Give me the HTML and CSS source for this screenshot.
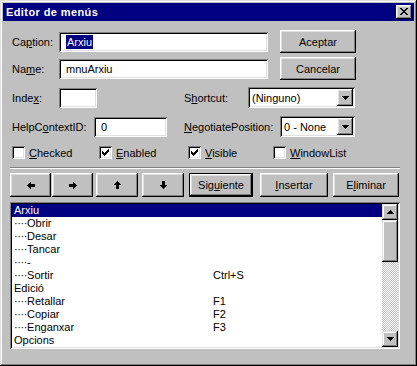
FILE: index.html
```html
<!DOCTYPE html>
<html>
<head>
<meta charset="utf-8">
<link rel="stylesheet" href="styles.css">
</head>
<body>
<div class="window">
  <div class="titlebar">
    <span class="title">Editor de menús</span>
    <span class="close raised"><svg width="8" height="7" viewBox="0 0 8 7" shape-rendering="crispEdges"><path d="M0 0h2v1H0zM6 0h2v1H6zM1 1h2v1H1zM5 1h2v1H5zM2 2h4v1H2zM3 3h2v1H3zM2 4h4v1H2zM1 5h2v1H1zM5 5h2v1H5zM0 6h2v1H0zM6 6h2v1H6z" fill="#000"/></svg></span>
  </div>
  <div class="content">
    <div class="row r1">
      <span class="lbl w-a">Ca<u>p</u>tion:</span>
      <div class="field sunken f-wide"><span class="sel">Arxiu</span></div>
      <div class="btn raised b-dlg">Aceptar</div>
    </div>
    <div class="row r2">
      <span class="lbl w-a">Na<u>m</u>e:</span>
      <div class="field sunken f-wide">mnuArxiu</div>
      <div class="btn raised b-dlg">Cancelar</div>
    </div>
    <div class="row r3">
      <span class="lbl w-a">Inde<u>x</u>:</span>
      <div class="field sunken f-index"></div>
      <span class="lbl w-short">S<u>h</u>ortcut:</span>
      <div class="combo sunken c-short"><span class="ctext">(Ninguno)</span><span class="dd raised"><svg width="7" height="4" viewBox="0 0 7 4" shape-rendering="crispEdges"><path d="M0 0h7v1H0zM1 1h5v1H1zM2 2h3v1H2zM3 3h1v1H3z" fill="#000"/></svg></span></div>
    </div>
    <div class="row r4">
      <span class="lbl w-help">HelpC<u>o</u>ntextID:</span>
      <div class="field sunken f-help">0</div>
      <span class="lbl w-neg"><u>N</u>egotiatePosition:</span>
      <div class="combo sunken c-neg"><span class="ctext">0 - None</span><span class="dd raised"><svg width="7" height="4" viewBox="0 0 7 4" shape-rendering="crispEdges"><path d="M0 0h7v1H0zM1 1h5v1H1zM2 2h3v1H2zM3 3h1v1H3z" fill="#000"/></svg></span></div>
    </div>
    <div class="row r5">
      <div class="chk k1"><span class="box sunken"></span><span class="clbl"><u>C</u>hecked</span></div>
      <div class="chk k2"><span class="box sunken"><svg width="7" height="7" viewBox="0 0 7 7" shape-rendering="crispEdges"><path d="M0 2h1v3H0zM1 3h1v3H1zM2 4h1v3H2zM3 3h1v3H3zM4 2h1v3H4zM5 1h1v3H5zM6 0h1v3H6z" fill="#000"/></svg></span><span class="clbl"><u>E</u>nabled</span></div>
      <div class="chk k3"><span class="box sunken"><svg width="7" height="7" viewBox="0 0 7 7" shape-rendering="crispEdges"><path d="M0 2h1v3H0zM1 3h1v3H1zM2 4h1v3H2zM3 3h1v3H3zM4 2h1v3H4zM5 1h1v3H5zM6 0h1v3H6z" fill="#000"/></svg></span><span class="clbl"><u>V</u>isible</span></div>
      <div class="chk k4"><span class="box sunken"></span><span class="clbl"><u>W</u>indowList</span></div>
    </div>
    <div class="sep"></div>
    <div class="row r6">
      <div class="btn raised a1"><svg width="8" height="7" viewBox="0 0 8 7" shape-rendering="crispEdges"><path d="M3 0h1v1H3zM2 1h2v1H2zM1 2h7v1H1zM0 3h8v1H0zM1 4h7v1H1zM2 5h2v1H2zM3 6h1v1H3z" fill="#000"/></svg></div>
      <div class="btn raised a2"><svg width="8" height="7" viewBox="0 0 8 7" shape-rendering="crispEdges"><g transform="translate(8,0) scale(-1,1)"><path d="M3 0h1v1H3zM2 1h2v1H2zM1 2h7v1H1zM0 3h8v1H0zM1 4h7v1H1zM2 5h2v1H2zM3 6h1v1H3z" fill="#000"/></g></svg></div>
      <div class="btn raised a3"><svg width="7" height="8" viewBox="0 0 7 8" shape-rendering="crispEdges"><g transform="translate(7,0) rotate(90)"><path d="M3 0h1v1H3zM2 1h2v1H2zM1 2h7v1H1zM0 3h8v1H0zM1 4h7v1H1zM2 5h2v1H2zM3 6h1v1H3z" fill="#000"/></g></svg></div>
      <div class="btn raised a4"><svg width="7" height="8" viewBox="0 0 7 8" shape-rendering="crispEdges"><g transform="translate(0,8) rotate(-90)"><path d="M3 0h1v1H3zM2 1h2v1H2zM1 2h7v1H1zM0 3h8v1H0zM1 4h7v1H1zM2 5h2v1H2zM3 6h1v1H3z" fill="#000"/></g></svg></div>
      <div class="btn raised def b-next">Sig<u>u</u>iente</div>
      <div class="btn raised b-ins"><u>I</u>nsertar</div>
      <div class="btn raised b-del">E<u>l</u>iminar</div>
    </div>
    <div class="list sunken">
      <div class="items">
        <div class="it selected"><span>Arxiu</span><span></span></div>
        <div class="it"><span><span class="dots">····</span>Obrir</span><span></span></div>
        <div class="it"><span><span class="dots">····</span>Desar</span><span></span></div>
        <div class="it"><span><span class="dots">····</span>Tancar</span><span></span></div>
        <div class="it"><span><span class="dots">····</span>-</span><span></span></div>
        <div class="it"><span><span class="dots">····</span>Sortir</span><span>Ctrl+S</span></div>
        <div class="it"><span>Edició</span><span></span></div>
        <div class="it"><span><span class="dots">····</span>Retallar</span><span>F1</span></div>
        <div class="it"><span><span class="dots">····</span>Copiar</span><span>F2</span></div>
        <div class="it"><span><span class="dots">····</span>Enganxar</span><span>F3</span></div>
        <div class="it"><span>Opcions</span><span></span></div>
      </div>
      <div class="scroll">
        <div class="sbtn sraised"><svg width="7" height="4" viewBox="0 0 7 4" shape-rendering="crispEdges"><path d="M3 0h1v1H3zM2 1h3v1H2zM1 2h5v1H1zM0 3h7v1H0z" fill="#000"/></svg></div>
        <div class="thumb sraised"></div>
        <div class="track"></div>
        <div class="sbtn sraised"><svg width="7" height="4" viewBox="0 0 7 4" shape-rendering="crispEdges"><path d="M0 0h7v1H0zM1 1h5v1H1zM2 2h3v1H2zM3 3h1v1H3z" fill="#000"/></svg></div>
      </div>
    </div>
  </div>
</div>
</body>
</html>
```

FILE: styles.css
```css
* { box-sizing: border-box; }
html, body { margin: 0; padding: 0; background: #c0c0c0; }
body {
  font-family: "Liberation Sans", Arial, sans-serif;
  font-size: 11px;
  color: #000;
}
u { text-underline-offset: 1px; }

.raised {
  background: #c0c0c0;
  box-shadow: inset -1px -1px #000, inset 1px 1px #fff, inset -2px -2px #808080, inset 2px 2px #dfdfdf;
}
.sraised {
  background: #c0c0c0;
  box-shadow: inset -1px -1px #000, inset 1px 1px #dfdfdf, inset -2px -2px #808080, inset 2px 2px #fff;
}
.sunken {
  background: #fff;
  box-shadow: inset 1px 1px #808080, inset -1px -1px #fff, inset 2px 2px #000, inset -2px -2px #dfdfdf;
}

.window {
  width: 417px;
  height: 366px;
  padding: 3px;
  background: #c0c0c0;
  box-shadow: inset -1px -1px #000, inset 1px 1px #dfdfdf, inset -2px -2px #808080, inset 2px 2px #fff;
}
.titlebar {
  height: 18px;
  background: #000080;
  color: #fff;
  display: flex;
  align-items: center;
  justify-content: space-between;
  padding: 0 2px 0 3px;
}
.title { font-weight: bold; font-size: 11px; letter-spacing: 0.4px; }
.close {
  width: 16px;
  height: 14px;
  display: flex;
  align-items: flex-start;
  padding: 3px 0 0 4px;
}
.close svg { display: block; }

.content { padding: 0 14px 0 7px; }
.row { display: flex; align-items: center; }
.r1 { margin-top: 9px; height: 23px; }
.r2 { margin-top: 4px; height: 23px; }
.r3 { margin-top: 7px; height: 21px; }
.r4 { margin-top: 8px; height: 21px; }
.r5 { margin-top: 9px; height: 13px; }
.r6 { margin-top: 4px; height: 24px; }

.lbl { white-space: nowrap; }
.w-a { width: 47px; margin-left: 2px; }
.w-short { width: 64px; margin-left: 87px; }
.w-help { width: 82px; margin-left: 2px; }
.w-neg { width: 96px; margin-left: 17px; }

.field {
  height: 20px;
  padding-left: 7px;
  display: flex;
  align-items: center;
  white-space: nowrap;
}
.f-wide { width: 209px; }
.f-index { width: 38px; }
.f-help { width: 73px; }
.sel {
  background: #000080;
  color: #fff;
  line-height: 14px;
  padding: 0 1px;
}

.btn {
  display: flex;
  align-items: center;
  justify-content: center;
  white-space: nowrap;
}
.b-dlg { width: 76px; height: 23px; margin-left: 12px; }

.combo {
  height: 21px;
  display: flex;
  align-items: center;
  justify-content: space-between;
  padding: 2px;
}
.c-short { width: 107px; }
.c-neg { width: 75px; }
.ctext { padding-left: 2px; white-space: nowrap; }
.dd {
  width: 16px;
  height: 17px;
  display: flex;
  align-items: center;
  justify-content: center;
}
.dd svg, .sbtn svg, .btn svg, .box svg { display: block; }

.chk { display: flex; align-items: center; white-space: nowrap; }
.k1 { margin-left: 2px; width: 87px; }
.k2 { width: 89px; }
.k3 { width: 85px; }
.box {
  width: 13px;
  height: 13px;
  flex: none;
  display: flex;
  align-items: center;
  justify-content: center;
}
.clbl { margin-left: 4px; }

.sep {
  margin-top: 8px;
  height: 2px;
  border-top: 1px solid #808080;
  border-bottom: 1px solid #fff;
}

.r6 .btn { height: 24px; }
.a1 { width: 41px; }
.a2 { width: 41px; margin-left: 1px; }
.a3 { width: 42px; margin-left: 3px; }
.a4 { width: 42px; margin-left: 4px; }
.b-next { width: 64px; margin-left: 5px; }
.b-ins { width: 68px; margin-left: 7px; }
.b-del { width: 66px; margin-left: 5px; }
.def {
  box-shadow: inset 0 0 0 1px #000, inset -2px -2px #000, inset 2px 2px #fff, inset -3px -3px #808080, inset 3px 3px #dfdfdf;
}

.list {
  margin-top: 5px;
  height: 147px;
  display: flex;
  padding: 2px;
}
.items { flex: 1; overflow: hidden; }
.it {
  display: grid;
  grid-template-columns: 199px auto;
  height: 13px;
  line-height: 13px;
  padding-left: 2px;
  white-space: pre;
}
.dots { letter-spacing: -0.4px; }
.selected { background: #000080; color: #fff; }

.scroll {
  width: 16px;
  display: flex;
  flex-direction: column;
}
.sbtn {
  height: 16px;
  flex: none;
  display: flex;
  align-items: center;
  justify-content: center;
}
.thumb { height: 42px; flex: none; }
.track {
  flex: 1;
  background: repeating-conic-gradient(#c0c0c0 0 25%, #fff 0 50%) 0 0 / 2px 2px;
}
```
